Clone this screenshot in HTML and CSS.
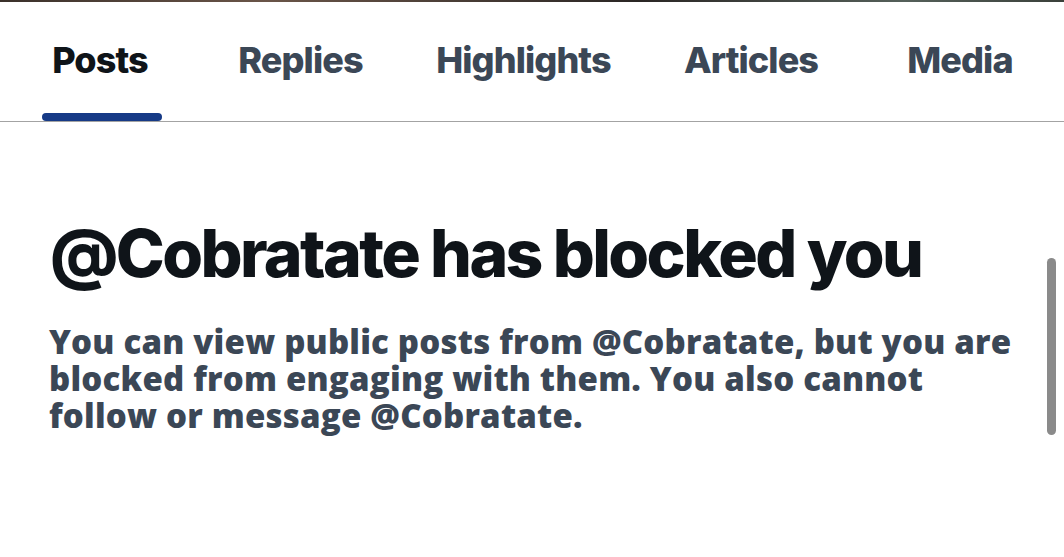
FILE: index.html
```html
<!DOCTYPE html>
<html lang="en">
<head>
<meta charset="utf-8">
<link rel="stylesheet" href="styles.css">
</head>
<body>
<div class="topstrip"></div>
<nav class="tabs">
  <div class="tab active"><span class="label">Posts</span><span class="indicator"></span></div>
  <div class="tab"><span class="label">Replies</span></div>
  <div class="tab"><span class="label">Highlights</span></div>
  <div class="tab"><span class="label">Articles</span></div>
  <div class="tab"><span class="label">Media</span></div>
</nav>
<main class="blocked">
  <h1 class="title">@Cobratate has blocked you</h1>
  <p class="desc">You can view public posts from @Cobratate, but you are blocked from engaging with them. You also cannot follow or message @Cobratate.</p>
</main>
<div class="scrollbar"></div>
</body>
</html>
```

FILE: styles.css
```css
html, body {
  margin: 0;
  padding: 0;
  background: #ffffff;
  width: 1064px;
  height: 557px;
  overflow: hidden;
}
body {
  position: relative;
  font-family: Inter, "Liberation Sans", sans-serif;
}
.topstrip {
  height: 2px;
  background: linear-gradient(90deg, #3a302a 0%, #6a5548 25%, #2a2624 60%, #55605a 85%, #3a403a 100%);
}
.tabs {
  display: grid;
  grid-template-columns: 200px 201px 245px 210px 1fr;
  height: 119px;
  border-bottom: 1px solid #a3a3a3;
}
.tab {
  display: flex;
  flex-direction: column;
  align-items: center;
  justify-content: space-between;
}
.label {
  margin-top: 38px;
  font-size: 36px;
  line-height: 40px;
  font-weight: 800;
  color: #3b4756;
  letter-spacing: -0.9px;
}
.tab.active .label {
  color: #0f1419;
}
.indicator {
  width: 120px;
  height: 8px;
  border-radius: 4px;
  background: #163a86;
  margin-left: 3px;
}
.blocked {
  padding: 0 40px 0 50px;
}
.title {
  margin: 91px 0 0 0;
  font-size: 66px;
  line-height: 80px;
  font-weight: 800;
  color: #0f1419;
  letter-spacing: -2.6px;
}
.desc {
  margin: 30px 0 0 -1px;
  font-family: "Open Sans", "Noto Sans", sans-serif;
  font-size: 33px;
  line-height: 37px;
  font-weight: 800;
  color: #3b4756;
  letter-spacing: 0.2px;
}
.scrollbar {
  position: absolute;
  left: 1047px;
  top: 258px;
  width: 9px;
  height: 177px;
  border-radius: 5px;
  background: #8a8a8a;
}
```
